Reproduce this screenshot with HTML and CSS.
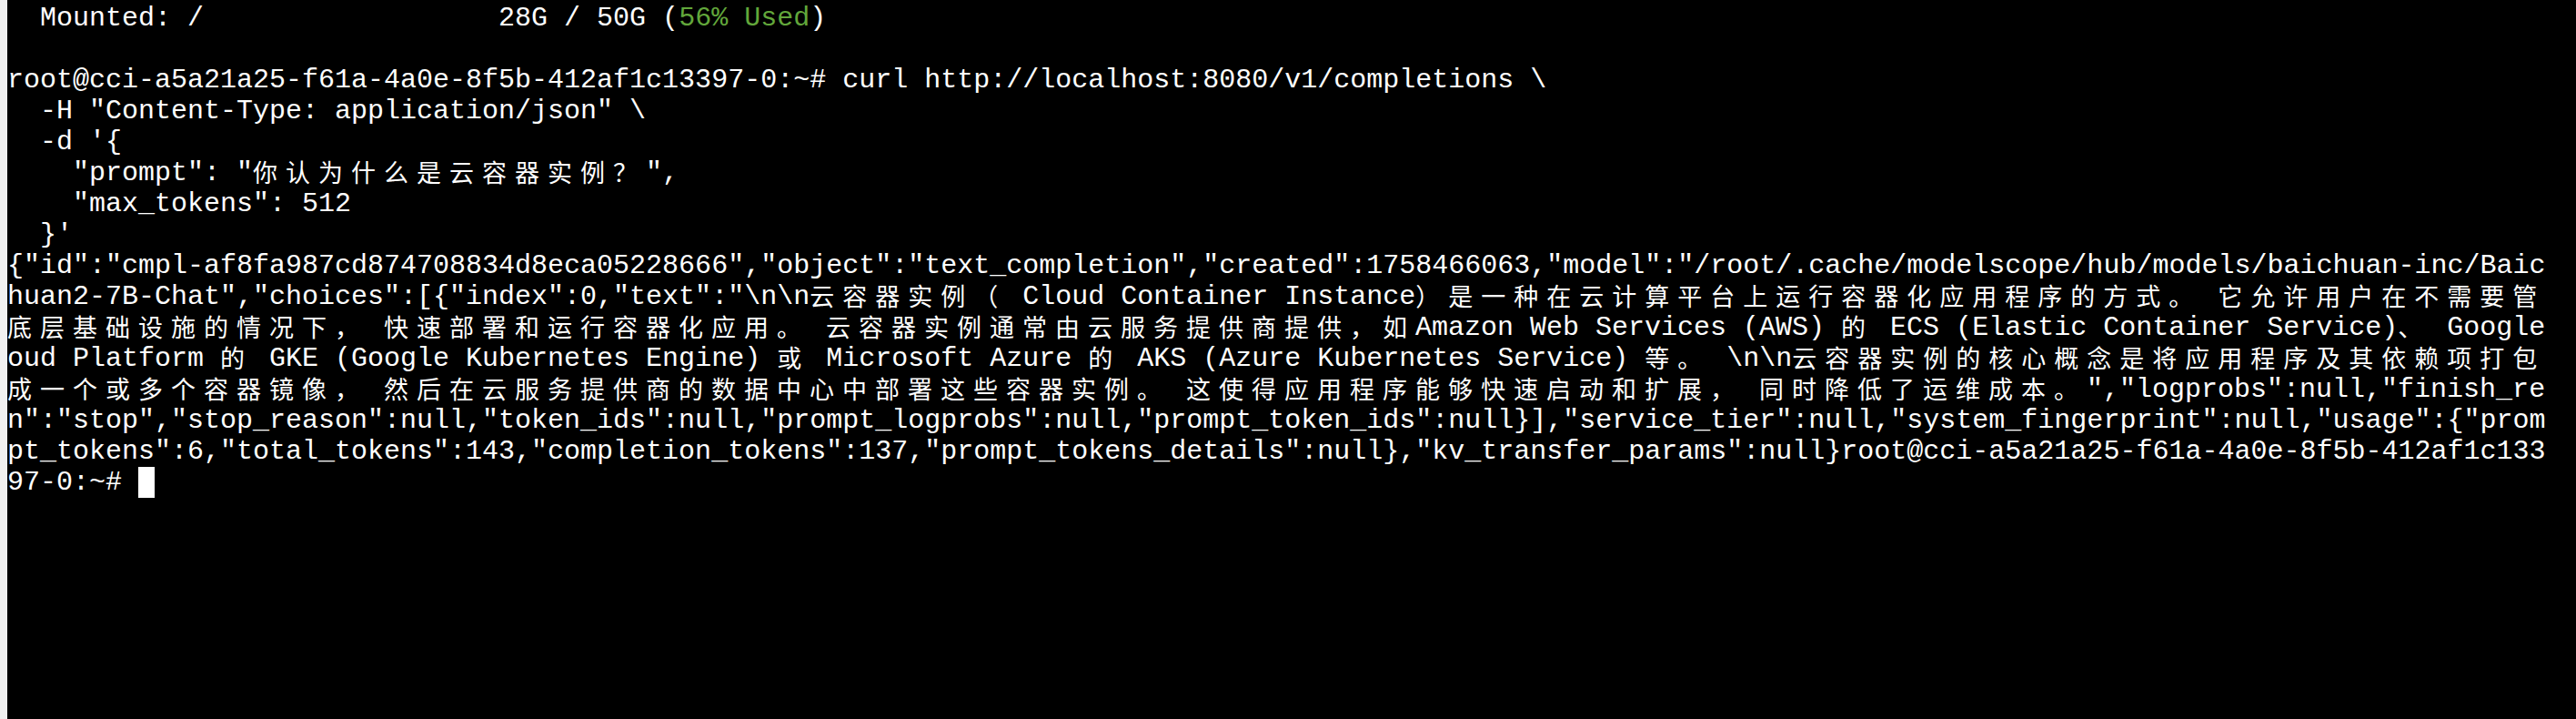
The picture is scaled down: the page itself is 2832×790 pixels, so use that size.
FILE: index.html
```html
<!DOCTYPE html>
<html lang="zh-CN">
<head>
<meta charset="utf-8">
<title>Terminal</title>
<link rel="stylesheet" href="styles.css">
</head>
<body>
<div class="gutter"></div>
<main class="term">
<div class="row">  Mounted: /                  28G / 50G (<span class="ok">56% Used</span>)</div>
<div class="row"></div>
<div class="row">root@cci-a5a21a25-f61a-4a0e-8f5b-412af1c13397-0:~# curl http://localhost:8080/v1/completions \</div>
<div class="row">  -H "Content-Type: application/json" \</div>
<div class="row">  -d '{</div>
<div class="row">    "prompt": "<span class="w">你认为什么是云容器实例？</span>",</div>
<div class="row">    "max_tokens": 512</div>
<div class="row">  }'</div>
<div class="row">{"id":"cmpl-af8fa987cd874708834d8eca05228666","object":"text_completion","created":1758466063,"model":"/root/.cache/modelscope/hub/models/baichuan-inc/Baic</div>
<div class="row">huan2-7B-Chat","choices":[{"index":0,"text":"\n\n<span class="w">云容器实例（</span> Cloud Container Instance<span class="w">）是一种在云计算平台上运行容器化应用程序的方式。</span> <span class="w">它允许用户在不需要管</span></div>
<div class="row"><span class="w">底层基础设施的情况下，</span> <span class="w">快速部署和运行容器化应用。</span> <span class="w">云容器实例通常由云服务提供商提供，如</span>Amazon Web Services (AWS) <span class="w">的</span> ECS (Elastic Container Service)<span class="w">、</span> Google</div>
<div class="row">oud Platform <span class="w">的</span> GKE (Google Kubernetes Engine) <span class="w">或</span> Microsoft Azure <span class="w">的</span> AKS (Azure Kubernetes Service) <span class="w">等。</span> \n\n<span class="w">云容器实例的核心概念是将应用程序及其依赖项打包</span></div>
<div class="row"><span class="w">成一个或多个容器镜像，</span> <span class="w">然后在云服务提供商的数据中心中部署这些容器实例。</span> <span class="w">这使得应用程序能够快速启动和扩展，</span> <span class="w">同时降低了运维成本。</span>","logprobs":null,"finish_re</div>
<div class="row">n":"stop","stop_reason":null,"token_ids":null,"prompt_logprobs":null,"prompt_token_ids":null}],"service_tier":null,"system_fingerprint":null,"usage":{"prom</div>
<div class="row">pt_tokens":6,"total_tokens":143,"completion_tokens":137,"prompt_tokens_details":null},"kv_transfer_params":null}root@cci-a5a21a25-f61a-4a0e-8f5b-412af1c133</div>
<div class="row">97-0:~# <span class="cursor"></span></div>
</main>
</body>
</html>
```
FILE: styles.css
```css
html, body {
  margin: 0;
  padding: 0;
  height: 100%;
}

body {
  display: flex;
  background: #000;
  overflow: hidden;
}

.gutter {
  flex: 0 0 8px;
  background: #f1f1f1;
}

.term {
  flex: 1;
  background: #000;
  color: #ffffff;
  padding-top: 3px;
  font-family: "Courier New", "Nimbus Mono PS", "FreeMono", "Liberation Mono", "Noto Sans CJK SC", monospace;
  font-size: 30px;
}

.row {
  height: 34px;
  line-height: 34px;
  white-space: pre;
}

.w {
  display: inline-block;
  height: 34px;
  line-height: 32px;
  vertical-align: top;
  font-family: "Noto Sans CJK SC", "Noto Sans CJK TC", sans-serif;
  font-size: 27px;
  letter-spacing: 9px;
}

.ok {
  color: #62a73b;
}

.cursor {
  display: inline-block;
  width: 18px;
  height: 34px;
  background: #ffffff;
  vertical-align: top;
}
```
